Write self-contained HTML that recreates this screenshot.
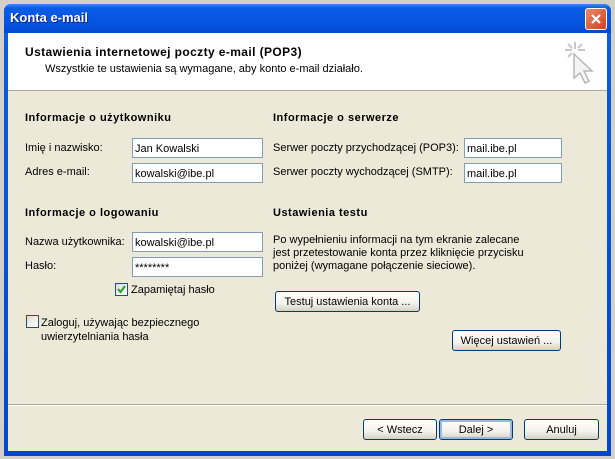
<!DOCTYPE html><html><head><meta charset="utf-8"><style>
*{margin:0;padding:0;box-sizing:border-box}
body{width:615px;height:459px;background:#d4d0c8;position:relative;overflow:hidden;font-family:"Liberation Sans",sans-serif;font-size:11px;color:#000}
.a{position:absolute;white-space:nowrap}
.win{position:absolute;left:4px;top:4px;width:607px;height:452px;background:linear-gradient(#0a5fe0,#0347d0);border-radius:7px 7px 0 0}
.title{position:absolute;left:0;top:0;width:607px;height:29px;background:linear-gradient(#3c8cf4 0,#0a5ce6 4px,#0554e0 20px,#0448d0 29px);border-radius:7px 7px 0 0}
.client{position:absolute;left:8px;top:33px;width:599px;height:418px;background:#ece9d8}
.hdr{position:absolute;left:8px;top:33px;width:599px;height:58px;background:#fff;border-bottom:1px solid #aca899}
.b{font-weight:bold;letter-spacing:0.5px}
.in{position:absolute;background:#fff;border:1px solid #7f9db9;padding:4px 0 0 2px;height:20px}
.btn{position:absolute;border:1px solid #003c74;border-radius:3px;background:linear-gradient(#fff,#f3f2ec 60%,#d6d0c0);text-align:center;line-height:20px;height:21px}
.cb{position:absolute;width:13px;height:13px;border:1px solid #1c5180;background:linear-gradient(135deg,#dcdcd6,#fff)}
</style></head><body>
<div class="win"><div class="title"></div></div>
<div class="a" style="left:10px;top:10px;color:#fff;font-size:13px;font-weight:bold;text-shadow:1px 1px #0a1e8c">Konta e-mail</div>
<div class="a" style="left:585px;top:8px;width:22px;height:22px;border:1px solid #fff;border-radius:3px;background:linear-gradient(135deg,#e88a6a,#d4401c)"><svg width="20" height="20" style="position:absolute;left:0;top:0"><path d="M6 6L14 14M14 6L6 14" stroke="#fff" stroke-width="2.2"/></svg></div>
<div class="client"></div>
<div class="hdr"></div>
<div class="a" style="left:25px;top:45px;font-weight:bold;font-size:12px;letter-spacing:0.4px">Ustawienia internetowej poczty e-mail (POP3)</div>
<div class="a" style="left:45px;top:63px">Wszystkie te ustawienia są wymagane, aby konto e-mail działało.</div>
<svg class="a" style="left:560px;top:40px" width="36" height="50"><g stroke="#c8c8c8" stroke-width="2"><path d="M15 2v7M5 10h7M18 10h7M8 4l4 4M22 4l-4 4M8 17l4-4"/></g><path d="M14 14v24l6-5 5 10 4-2-5-10 8 0z" fill="#f4f4f4" stroke="#b8b8b8" stroke-width="1.5"/></svg>
<div class="a b" style="left:25px;top:112px">Informacje o użytkowniku</div>
<div class="a" style="left:25px;top:142px">Imię i nazwisko:</div>
<div class="a" style="left:25px;top:166px">Adres e-mail:</div>
<div class="in" style="left:132px;top:138px;width:131px">Jan Kowalski</div>
<div class="in" style="left:132px;top:163px;width:131px">kowalski@ibe.pl</div>
<div class="a b" style="left:25px;top:207px">Informacje o logowaniu</div>
<div class="a" style="left:25px;top:236px">Nazwa użytkownika:</div>
<div class="a" style="left:25px;top:260px">Hasło:</div>
<div class="in" style="left:132px;top:232px;width:131px">kowalski@ibe.pl</div>
<div class="in" style="left:132px;top:257px;width:131px">********</div>
<div class="cb" style="left:115px;top:283px"><svg width="11" height="11" style="position:absolute;left:0;top:0"><path d="M2 5l2.5 3L9 2" stroke="#21a121" stroke-width="2" fill="none"/></svg></div>
<div class="a" style="left:131px;top:284px">Zapamiętaj hasło</div>
<div class="cb" style="left:26px;top:315px"></div>
<div class="a" style="left:41px;top:316px;line-height:14px">Zaloguj, używając bezpiecznego<br>uwierzytelniania hasła</div>
<div class="a b" style="left:273px;top:112px">Informacje o serwerze</div>
<div class="a" style="left:273px;top:142px">Serwer poczty przychodzącej (POP3):</div>
<div class="a" style="left:273px;top:166px">Serwer poczty wychodzącej (SMTP):</div>
<div class="in" style="left:464px;top:138px;width:98px">mail.ibe.pl</div>
<div class="in" style="left:464px;top:163px;width:98px">mail.ibe.pl</div>
<div class="a b" style="left:273px;top:207px">Ustawienia testu</div>
<div class="a" style="left:273px;top:234px;line-height:13px">Po wypełnieniu informacji na tym ekranie zalecane<br>jest przetestowanie konta przez kliknięcie przycisku<br>poniżej (wymagane połączenie sieciowe).</div>
<div class="btn" style="left:275px;top:291px;width:145px">Testuj ustawienia konta ...</div>
<div class="btn" style="left:452px;top:330px;width:109px">Więcej ustawień ...</div>
<div class="a" style="left:8px;top:404px;width:599px;border-top:1px solid #aca899;border-bottom:1px solid #fff"></div>
<div class="btn" style="left:363px;top:419px;width:74px">&lt; Wstecz</div>
<div class="btn" style="left:439px;top:419px;width:74px;box-shadow:inset 0 0 0 2px #98b8ea">Dalej &gt;</div>
<div class="btn" style="left:524px;top:419px;width:75px">Anuluj</div>
</body></html>
